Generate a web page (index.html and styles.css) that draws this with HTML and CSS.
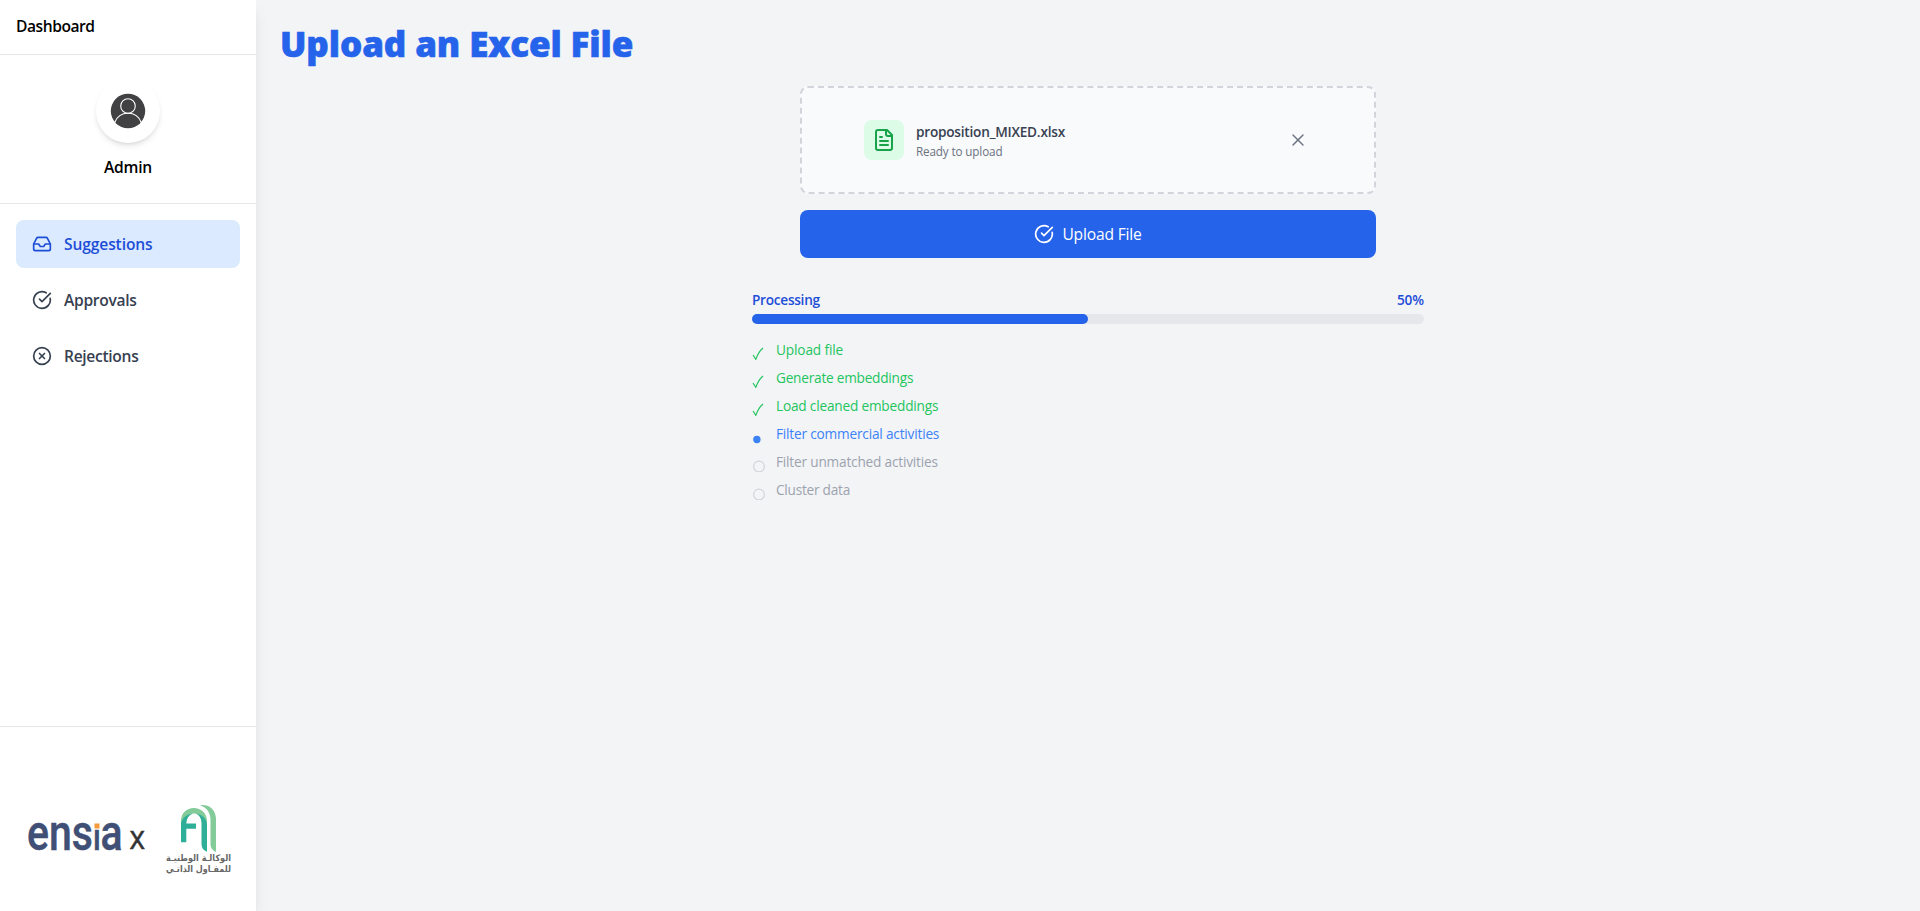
FILE: index.html
```
<!DOCTYPE html>
<html lang="en">
<head>
<meta charset="utf-8">
<title>Dashboard</title>
<link rel="stylesheet" href="styles.css">
</head>
<body>
<div class="layout">
  <aside class="sidebar">
    <header class="brand"><span class="t-dash">Dashboard</span></header>
    <section class="profile">
      <div class="avatar">
        <svg width="36" height="36" viewBox="0 0 36 36" fill="none" stroke="#fff" stroke-width="1.1">
          <circle cx="18" cy="18" r="17.2" fill="#414042" stroke="none"/>
          <circle cx="18" cy="13" r="7.3"/>
          <path d="M4.8 29.5C7 23.500 12 20.300 18 20.300S29 23.500 31.200 29.500"/>
        </svg>
      </div>
      <span class="t-admin">Admin</span>
    </section>
    <nav class="nav">
      <a class="item active">
        <svg class="icon" viewBox="0 0 24 24"><path d="M22 12h-6l-2 3h-4l-2-3H2"/><path d="M5.450 5.110 2 12v6a2 2 0 0 0 2 2h16a2 2 0 0 0 2-2v-6l-3.450-6.890A2 2 0 0 0 16.760 4H7.240a2 2 0 0 0-1.790 1.110z"/></svg>
        <span class="t-sug">Suggestions</span>
      </a>
      <a class="item">
        <svg class="icon" viewBox="0 0 24 24"><path d="M21.801 10A10 10 0 1 1 17 3.335"/><path d="m9 11 3 3L22 4"/></svg>
        <span class="t-app">Approvals</span>
      </a>
      <a class="item">
        <svg class="icon" viewBox="0 0 24 24"><circle cx="12" cy="12" r="10"/><path d="m15 9-6 6"/><path d="m9 9 6 6"/></svg>
        <span class="t-rej">Rejections</span>
      </a>
    </nav>
    <footer class="partners">
      <svg width="256" height="184" viewBox="0 727 256 184">
        <text class="ensia" transform="translate(27 850) scale(.82 1)">ens<tspan class="ensia-i">i</tspan>a</text>
        <rect x="92" y="820" width="9" height="9" fill="#fff"/>
        <rect x="94.500" y="823.500" width="5" height="5" fill="#f39a3d"/>
        <text class="cross" x="129.500" y="848.500" textLength="15.500" lengthAdjust="spacingAndGlyphs">x</text>
        <path d="M200 805.200C209 803.500 216 810 216 819V851.800C213 851 210.500 848 210.500 844V820C210.500 812.500 207 807.500 200 805.200Z" fill="#83cb99"/>
        <path d="M181 825V821C181 813 187 808 193.800 808S207 813 207 821V830L201.500 822C201 816 198 813.500 194 813.500S187 816 186.500 822Z" fill="#83cb99"/>
        <path d="M181 842.300V823C183 817 188 813.500 194 813.500C190 814 186.500 817.500 186.300 823.500H196V828.800H186.300V842.300Z" fill="#2fae98"/>
        <path d="M194 813.500C202 813.500 207 819 207 825V851.800C203.500 850.500 201.500 848 201.500 844V822C201 816.500 198 813.500 194 813.500Z" fill="#2fae98"/>
        <g class="agency">
          <text x="231" y="861" textLength="65" lengthAdjust="spacingAndGlyphs" direction="rtl">الوكالـة الوطنيـة</text>
          <text x="231" y="871.500" textLength="65" lengthAdjust="spacingAndGlyphs" direction="rtl">للمقـاول الذاتـي</text>
        </g>
      </svg>
    </footer>
  </aside>
  <main class="main">
    <h1 class="title">Upload an Excel File</h1>
    <section class="upload">
      <div class="dropzone">
        <div class="file">
          <div class="file-icon">
            <svg class="icon big" viewBox="0 0 24 24"><path d="M15 2H6a2 2 0 0 0-2 2v16a2 2 0 0 0 2 2h12a2 2 0 0 0 2-2V7Z"/><path d="M14 2v4a2 2 0 0 0 2 2h4"/><path d="M10 9H8"/><path d="M16 13H8"/><path d="M16 17H8"/></svg>
          </div>
          <div class="file-info">
            <span class="file-name">proposition_MIXED.xlsx</span>
            <span class="file-state">Ready to upload</span>
          </div>
          <svg class="icon close" viewBox="0 0 24 24"><path d="M18 6 6 18"/><path d="m6 6 12 12"/></svg>
        </div>
      </div>
      <button class="submit">
        <svg class="icon" viewBox="0 0 24 24"><path d="M21.801 10A10 10 0 1 1 17 3.335"/><path d="m9 11 3 3L22 4"/></svg>
        <span class="t-btn">Upload File</span>
      </button>
    </section>
    <section class="progress">
      <div class="progress-head"><span class="t-proc">Processing</span><span class="t-pct">50%</span></div>
      <div class="track"><div class="fill" style="width:50%"></div></div>
      <ul class="steps">
        <li class="done"><svg class="mark" viewBox="0 0 14 20"><path d="M1 15 3.800 19.300C5.500 14.500 8 10.500 11 8"/></svg><span class="s1">Upload file</span></li>
        <li class="done"><svg class="mark" viewBox="0 0 14 20"><path d="M1 15 3.800 19.300C5.500 14.500 8 10.500 11 8"/></svg><span class="s2">Generate embeddings</span></li>
        <li class="done"><svg class="mark" viewBox="0 0 14 20"><path d="M1 15 3.800 19.300C5.500 14.500 8 10.500 11 8"/></svg><span class="s3">Load cleaned embeddings</span></li>
        <li class="current"><svg class="mark" viewBox="0 0 14 20"><circle cx="4.900" cy="15.500" r="3.700"/></svg><span class="s4">Filter commercial activities</span></li>
        <li class="pending"><svg class="mark" viewBox="0 0 14 20"><circle cx="7" cy="14.500" r="5.400"/></svg><span class="s5">Filter unmatched activities</span></li>
        <li class="pending"><svg class="mark" viewBox="0 0 14 20"><circle cx="7" cy="14.500" r="5.400"/></svg><span class="s6">Cluster data</span></li>
      </ul>
    </section>
  </main>
</div>
</body>
</html>
```
FILE: styles.css
```
* { box-sizing: border-box; }
body { margin: 0; font-family: "Open Sans", "Noto Sans", sans-serif; font-size: 15.6px; line-height: 24px; color: #000; background: #f3f4f6; }
span, h1 { white-space: nowrap; }
.layout { display: flex; height: 911px; overflow: hidden; }
.sidebar { width: 256px; flex: none; display: flex; flex-direction: column; background: #fff; box-shadow: 0 10px 15px -3px rgba(0,0,0,.1), 0 4px 6px -4px rgba(0,0,0,.1); font-weight: 600; }
.brand { height: 55px; padding: 14px 16px; border-bottom: 1px solid #e5e7eb; }
.profile { height: 149px; padding-top: 24px; border-bottom: 1px solid #e5e7eb; display: flex; flex-direction: column; align-items: center; gap: 12px; }
.avatar { width: 64px; height: 64px; border-radius: 50%; display: grid; place-items: center; box-shadow: 0 4px 6px -1px rgba(0,0,0,.1), 0 2px 4px -2px rgba(0,0,0,.1); }
.nav { padding: 16px; display: flex; flex-direction: column; gap: 8px; flex: 1; }
.item { display: flex; align-items: center; gap: 12px; height: 48px; padding: 0 16px; border-radius: 8px; color: #374151; }
.active { background: #dbeafe; color: #1d4ed8; }
.icon { width: 20px; height: 20px; flex: none; fill: none; stroke: currentColor; stroke-width: 2; stroke-linecap: round; stroke-linejoin: round; }
.big { width: 24px; height: 24px; }
.partners { height: 185px; border-top: 1px solid #e5e7eb; }
.partners svg { display: block; }
.ensia { font: 500 50px Roboto, sans-serif; fill: #3f4f75; stroke: #3f4f75; stroke-width: .5px; }
.ensia-i { font-size: 37px; }
.cross { font: 400 32px "Open Sans", sans-serif; fill: #333; stroke: #333; stroke-width: .5px; }
.agency { font: 700 9px "DejaVu Sans", sans-serif; fill: #666; }
.main { flex: 1; padding: 24px; display: flex; flex-direction: column; }
.title { margin: 0; font-size: 35px; line-height: 40px; font-weight: 800; color: #2563eb; letter-spacing: -.12px; -webkit-text-stroke: .6px #2563eb; }
.upload { width: 576px; margin: 22px auto 0; display: flex; flex-direction: column; gap: 16px; }
.dropzone { height: 108px; padding: 32px 62px; border: 2px dashed #d1d5db; border-radius: 8px; background: #f9fafb; }
.file { display: flex; align-items: center; gap: 12px; height: 40px; width: 448px; }
.file-icon { width: 40px; height: 40px; border-radius: 8px; display: grid; place-items: center; background: #dcfce7; color: #16a34a; }
.file-info { display: flex; flex-direction: column; flex: 1; gap: 1px; padding-top: 1px; }
.file-name { font-size: 13.65px; line-height: 20px; font-weight: 600; color: #374151; letter-spacing: -.23px; }
.file-state { font-size: 11.7px; line-height: 16px; color: #6b7280; letter-spacing: -.14px; }
.close { color: #6b7280; margin-right: 4px; stroke-width: 1.7; }
.submit { height: 48px; border: 0; border-radius: 8px; background: #2563eb; color: #fff; font: inherit; display: flex; align-items: center; justify-content: center; gap: 8px; }
.progress { width: 672px; margin: 32px auto 0; }
.progress-head { display: flex; justify-content: space-between; height: 24px; font-size: 13.65px; line-height: 20px; font-weight: 600; color: #1d4ed8; }
.track { height: 10px; border-radius: 5px; background: #e5e7eb; }
.fill { height: 10px; border-radius: 5px; background: #2563eb; }
.steps { list-style: none; margin: 16px 0 0; padding: 0; display: flex; flex-direction: column; gap: 8px; font-size: 13.65px; line-height: 20px; }
.steps li { display: flex; gap: 10px; height: 20px; }
.mark { width: 14px; height: 20px; fill: none; stroke: currentColor; stroke-width: 1.2; }
.done { color: #22c55e; }
.current { color: #3b82f6; }
.current .mark { fill: #3b82f6; stroke: none; }
.pending { color: #9ca3af; }
.pending .mark { stroke: #d1d5db; }

/* Optical tracking per label */
.t-dash { letter-spacing: -.45px; }
.t-admin { letter-spacing: -.2px; }
.t-sug { letter-spacing: -.12px; }
.t-app { letter-spacing: -.31px; }
.t-rej { letter-spacing: -.31px; }
.t-btn { letter-spacing: -.18px; }
.t-proc { letter-spacing: -.27px; }
.t-pct { letter-spacing: -.1px; }
.s1 { letter-spacing: -.14px; }
.s2 { letter-spacing: -.23px; }
.s3, .s4, .s5 { letter-spacing: -.19px; }
.s6 { letter-spacing: -.24px; }
```
